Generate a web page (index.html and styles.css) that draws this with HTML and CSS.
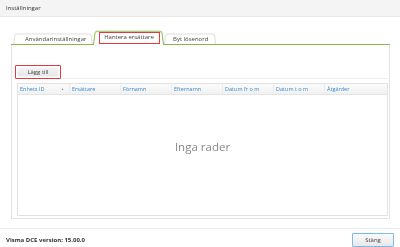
FILE: index.html
```html
<!DOCTYPE html>
<html lang="sv">
<head>
    <meta charset="UTF-8">
    <title>Inställningar</title>
    <link rel="stylesheet" href="styles.css">
</head>
<body>

    <div class="titlebar">Inställningar</div>

    <div class="main">
        <!-- Flikar -->
        <div class="tabs">
            <div class="tab first">Användarinställningar</div>
            <div class="tab active"><span class="mark">Hantera ersättare</span></div>
            <div class="tab">Byt lösenord</div>
        </div>

        <div class="panel">
            <div class="toolbar">
                <button class="btn add">Lägg till</button>
            </div>

            <div class="grid">
                <div class="grid-head">
                    <div class="col first-col">Enhets ID<span class="sort">&#9650;</span></div>
                    <div class="col">Ersättare</div>
                    <div class="col">Förnamn</div>
                    <div class="col">Efternamn</div>
                    <div class="col">Datum fr o m</div>
                    <div class="col">Datum t o m</div>
                    <div class="col last-col">Åtgärder</div>
                </div>
                <div class="grid-body">Inga rader</div>
            </div>
        </div>
    </div>

    <div class="footer">
        <span class="version">Visma DCE version: 15.00.0</span>
        <button class="btn close">Stäng</button>
    </div>

</body>
</html>
```

FILE: styles.css
```css
* {
    margin: 0;
    padding: 0;
    box-sizing: border-box;
}

body {
    font-family: 'Open Sans', 'Liberation Sans', sans-serif;
    background-color: #fff;
    color: #444;
    width: 400px;
    height: 247px;
    overflow: hidden;
    font-size: 6px;
}

.titlebar {
    height: 17px;
    background-color: #f4f4f4;
    border-bottom: 1px solid #e8e8e8;
    padding-left: 6px;
    line-height: 16px;
    font-size: 6px;
    color: #333;
}

.main {
    padding: 13px 10px 0 11px;
}

/* Flikar */
.tabs {
    display: flex;
    align-items: flex-end;
    height: 15px;
    border-bottom: 1px solid #86b94a;
    padding-left: 2px;
}

.tab {
    position: relative;
    height: 12px;
    line-height: 12px;
    padding: 0 10px;
    color: #444;
    margin-bottom: -1px;
    white-space: nowrap;
}

.tab::before {
    content: '';
    position: absolute;
    top: 0;
    left: 0;
    right: 0;
    bottom: 0;
    border: 1px solid #dcdcdc;
    border-bottom: none;
    border-radius: 3px 3px 0 0;
    background-color: #fff;
    transform: perspective(20px) rotateX(4deg);
    transform-origin: bottom;
    z-index: -1;
}

.tab.first {
    width: 80px;
    padding-left: 12px;
}

.tab.active {
    height: 15px;
    width: 71px;
    padding: 2px 4px 0 6px;
    z-index: 2;
}

.tab.active::before {
    border-color: #86b94a;
    z-index: -1;
}

.tab.active::after {
    content: '';
    position: absolute;
    left: 1px;
    right: 1px;
    bottom: 0;
    height: 1px;
    background-color: #fff;
}

.mark {
    display: block;
    height: 12px;
    line-height: 9px;
    border: 1.5px solid #e0393e;
    text-align: center;
    padding-right: 1px;
}

.tab:last-child {
    width: 52px;
    padding-left: 9px;
}

/* Panneau */
.panel {
    height: 174px;
    border: 1px solid #e4e4e4;
    border-top: none;
    padding: 20px 1px 0 5px;
}

.toolbar {
    height: 14px;
    border-bottom: 1px solid #eeeeee;
    margin-bottom: 4px;
}

.btn {
    font-family: 'Open Sans', 'Liberation Sans', sans-serif;
    font-size: 6px;
    color: #444;
    cursor: pointer;
    background: linear-gradient(#fafafa, #e9e9e9);
    border: 1px solid #cfcfcf;
    border-radius: 1px;
}

.btn.add {
    width: 46px;
    height: 14px;
    margin-left: -2px;
    border: 1.5px solid #e0393e;
    box-shadow: inset 0 0 0 1.5px #fff;
    background: linear-gradient(#f4f4f4, #e6e6e6);
}

/* Grille */
.grid {
    height: 133px;
    border: 1px solid #e2e2e2;
    display: flex;
    flex-direction: column;
}

.grid-head {
    display: flex;
    height: 11px;
    background: linear-gradient(#fbfbfb, #f1f1f1);
    border-bottom: 1px solid #e4e4e4;
}

.col {
    width: 51px;
    line-height: 10px;
    padding-left: 2px;
    font-size: 5.5px;
    color: #3a8ad0;
    border-right: 1px solid #ececec;
    position: relative;
}

.first-col {
    width: 52px;
}

.last-col {
    flex: 1;
    border-right: none;
}

.sort {
    position: absolute;
    right: 5px;
    top: 0;
    font-size: 3px;
    color: #777;
}

.grid-body {
    flex: 1;
    display: flex;
    align-items: center;
    justify-content: center;
    padding-bottom: 18px;
    font-size: 11.5px;
    color: #888;
}

/* Pied */
.footer {
    margin-top: 9px;
    border-top: 1px solid #ececec;
    height: 19px;
    display: flex;
    align-items: center;
    justify-content: space-between;
    padding: 3px 6px 0 6px;
}

.version {
    font-weight: bold;
    font-size: 6px;
    color: #333;
}

.btn.close {
    width: 42px;
    height: 14px;
    border: 1.5px solid #7dbbe8;
}
```
